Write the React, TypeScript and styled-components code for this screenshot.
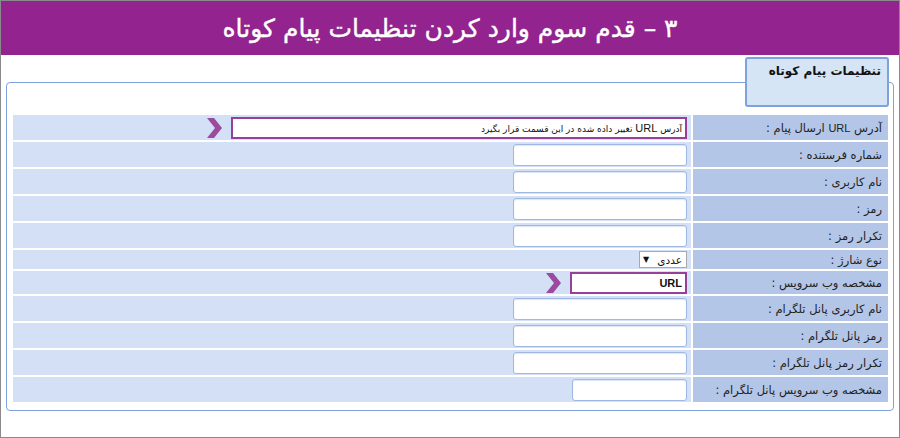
import React from "react";
import styled, { createGlobalStyle } from "styled-components";

const Global = createGlobalStyle`
  html, body { margin: 0; padding: 0; background: #fff; }
  body { font-family: "DejaVu Sans", "Noto Sans", sans-serif; }
`;

const Frame = styled.div`
  box-sizing: border-box;
  width: 900px;
  height: 438px;
  border: 1px solid #8a8a8a;
  background: #fff;
  overflow: hidden;
`;

const Header = styled.div`
  height: 54px;
  background: #93238f;
  color: #fff;
  display: flex;
  align-items: center;
  justify-content: center;
  direction: rtl;
  font-family: "DejaVu Sans", sans-serif;
  font-size: 25px;
  font-weight: normal;
  -webkit-text-stroke: 0.4px #fff;
`;

const Body = styled.div`
  padding: 2px 5px 0 5px;
`;

const Fieldset = styled.fieldset`
  direction: rtl;
  margin: 0;
  border: 1px solid #7ea2dc;
  border-radius: 4px;
  padding: 8px 5px 6px 6px;
  min-inline-size: 0;
  height: 354px;
  box-sizing: border-box;
`;

const Legend = styled.legend`
  box-sizing: border-box;
  width: 144px;
  height: 50px;
  margin-right: -1px;
  padding: 5px 6px 0 0;
  background: #d6e5f6;
  border: 2px solid #7ea2dc;
  border-radius: 3px;
  font-family: "DejaVu Sans", sans-serif;
  font-size: 12px;
  font-weight: bold;
  color: #111;
  text-align: right;
`;

const Rows = styled.div`
  display: flex;
  flex-direction: column;
  gap: 2px;
`;

const Row = styled.div<{ $h: number }>`
  display: grid;
  grid-template-columns: 195px 1fr;
  gap: 2px;
  height: ${(p) => p.$h}px;
`;

const Label = styled.div`
  background: #b4c6e7;
  display: flex;
  align-items: center;
  padding-right: 6px;
  font-family: "DejaVu Sans", sans-serif;
  font-size: 11.5px;
  color: #222;
  white-space: nowrap;
`;

const Value = styled.div`
  background: #d3e0f6;
  display: flex;
  align-items: center;
  padding-right: 4px;
  gap: 9px;
`;

const Input = styled.div<{ $w: number; $hl?: boolean }>`
  box-sizing: border-box;
  width: ${(p) => p.$w}px;
  height: 22px;
  background: #fff;
  border: ${(p) => (p.$hl ? "2px solid #97409a" : "1px solid #9fb8e3")};
  border-radius: ${(p) => (p.$hl ? "0" : "3px")};
  box-shadow: ${(p) => (p.$hl ? "none" : "inset 0 1px 1px rgba(120,150,210,0.25)")};
  display: flex;
  align-items: center;
  padding: 0 3px;
  font-family: "DejaVu Sans", sans-serif;
  font-size: 9px;
  color: #111;
  white-space: nowrap;
  overflow: hidden;
`;

const Latin = styled.span<{ $bold?: boolean }>`
  font-family: "Liberation Sans", Arial, sans-serif;
  font-size: 11px;
  font-weight: ${(p) => (p.$bold ? "bold" : "normal")};
`;

const Select = styled.div`
  box-sizing: border-box;
  width: 48px;
  height: 17px;
  background: #fff;
  border: 1px solid #a9a9a9;
  display: flex;
  align-items: center;
  justify-content: space-between;
  padding: 0 4px 0 3px;
  font-family: "DejaVu Sans", sans-serif;
  font-size: 10.5px;
  color: #111;
`;

const Caret = styled.span`
  font-size: 8px;
  color: #111;
`;

const Arrow = () => (
  <svg width="16" height="20" viewBox="0 0 16 20">
    <polygon points="1,0 8,0 16,10 8,20 1,20 9,10" fill="#9c4a9e" />
  </svg>
);

type R = {
  label: React.ReactNode;
  h: number;
  kind: "input" | "url" | "select" | "web" | "small";
};

const rows: R[] = [
  { label: <>آدرس <Latin>URL</Latin> ارسال پیام :</>, h: 25, kind: "url" },
  { label: "شماره فرستنده :", h: 25, kind: "input" },
  { label: "نام کاربری :", h: 25, kind: "input" },
  { label: "رمز :", h: 25, kind: "input" },
  { label: "تکرار رمز :", h: 25, kind: "input" },
  { label: "نوع شارژ :", h: 19, kind: "select" },
  { label: "مشخصه وب سرویس :", h: 23, kind: "web" },
  { label: "نام کاربری پانل تلگرام :", h: 25, kind: "input" },
  { label: "رمز پانل تلگرام :", h: 25, kind: "input" },
  { label: "تکرار رمز پانل تلگرام :", h: 25, kind: "input" },
  { label: "مشخصه وب سرویس پانل تلگرام :", h: 25, kind: "small" },
];

function renderValue(kind: R["kind"]) {
  switch (kind) {
    case "url":
      return (
        <>
          <Input $w={456} $hl>
            <span>
              آدرس <Latin>URL</Latin> تغییر داده شده در این قسمت قرار بگیرد
            </span>
          </Input>
          <Arrow />
        </>
      );
    case "web":
      return (
        <>
          <Input $w={117} $hl>
            <Latin $bold>URL</Latin>
          </Input>
          <Arrow />
        </>
      );
    case "select":
      return (
        <Select>
          <span>عددی</span>
          <Caret>▼</Caret>
        </Select>
      );
    case "small":
      return <Input $w={115} />;
    default:
      return <Input $w={174} />;
  }
}

export default function App() {
  return (
    <>
      <Global />
      <Frame>
        <Header>۳ – قدم سوم وارد کردن تنظیمات پیام کوتاه</Header>
        <Body>
          <Fieldset>
            <Legend>تنظیمات پیام کوتاه</Legend>
            <Rows>
              {rows.map((r, i) => (
                <Row key={i} $h={r.h}>
                  <Label>
                    <span>{r.label}</span>
                  </Label>
                  <Value>{renderValue(r.kind)}</Value>
                </Row>
              ))}
            </Rows>
          </Fieldset>
        </Body>
      </Frame>
    </>
  );
}
